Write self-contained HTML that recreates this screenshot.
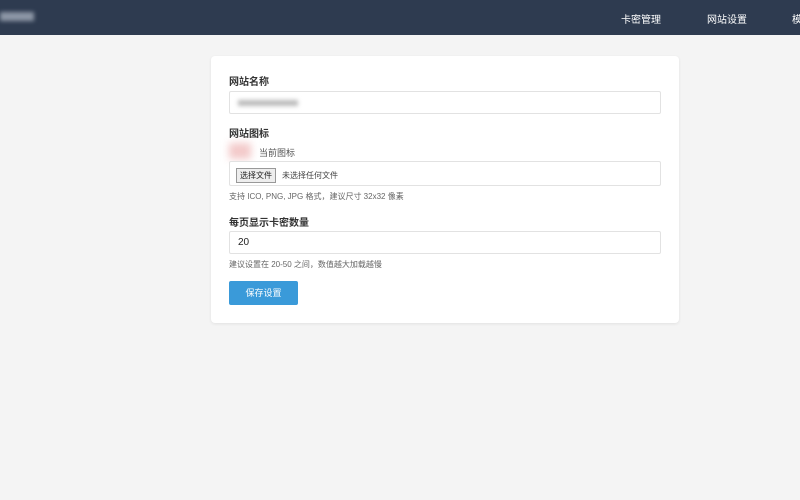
<!DOCTYPE html>
<html><head><meta charset="utf-8"><style>
*{box-sizing:border-box;margin:0;padding:0}
body{width:800px;height:500px;background:#f4f4f4;font-family:"Liberation Sans","Noto Sans CJK SC",sans-serif;position:relative;overflow:hidden;color:#333}
.nav{position:absolute;left:0;top:0;width:800px;height:35px;background:#2e3b50}
.logo{position:absolute;left:0;top:12px;width:34px;height:9px;background:#8d97a6;filter:blur(2px)}
.nav span{position:absolute;top:11px;color:#fff;font-size:10px}
.card{position:absolute;left:211px;top:56px;width:468px;height:267px;background:#fff;border-radius:4px;box-shadow:0 1px 3px rgba(0,0,0,.08)}
.lbl{position:absolute;left:18px;font-size:10px;font-weight:bold;color:#333}
.inp{position:absolute;left:18px;width:432px;height:23px;border:1px solid #e2e2e2;border-radius:2px;background:#fff}
.hint{position:absolute;left:18px;font-size:8px;color:#666}
</style></head><body>
<div class="nav"><div class="logo"></div>
<span style="left:621px">卡密管理</span><span style="left:707px">网站设置</span><span style="left:792px">模</span></div>
<div class="card">
<div class="lbl" style="top:17px">网站名称</div>
<div class="inp" style="top:35px"><div style="position:absolute;left:8px;top:8px;width:60px;height:6px;background:#bbb;filter:blur(2px)"></div></div>
<div class="lbl" style="top:69px">网站图标</div>
<div style="position:absolute;left:18px;top:87px;width:22px;height:16px;background:#f3c9c9;filter:blur(4px)"></div>
<div style="position:absolute;left:48px;top:90px;font-size:9px;color:#555">当前图标</div>
<div class="inp" style="top:105px;height:25px"><span style="position:absolute;left:6px;top:6px;font-size:8px;border:1px solid #999;background:#eee;padding:1px 3px;color:#222">选择文件</span><span style="position:absolute;left:52px;top:8px;font-size:8px;color:#444">未选择任何文件</span></div>
<div class="hint" style="top:135px">支持 ICO, PNG, JPG 格式，建议尺寸 32x32 像素</div>
<div class="lbl" style="top:158px">每页显示卡密数量</div>
<div class="inp" style="top:175px"><span style="position:absolute;left:8px;top:5px;font-size:10px;color:#222">20</span></div>
<div class="hint" style="top:203px">建议设置在 20-50 之间，数值越大加载越慢</div>
<div style="position:absolute;left:18px;top:225px;width:69px;height:24px;background:#3a9ad9;border-radius:2px;color:#fff;font-size:9px;text-align:center;line-height:24px">保存设置</div>
</div>
</body></html>
